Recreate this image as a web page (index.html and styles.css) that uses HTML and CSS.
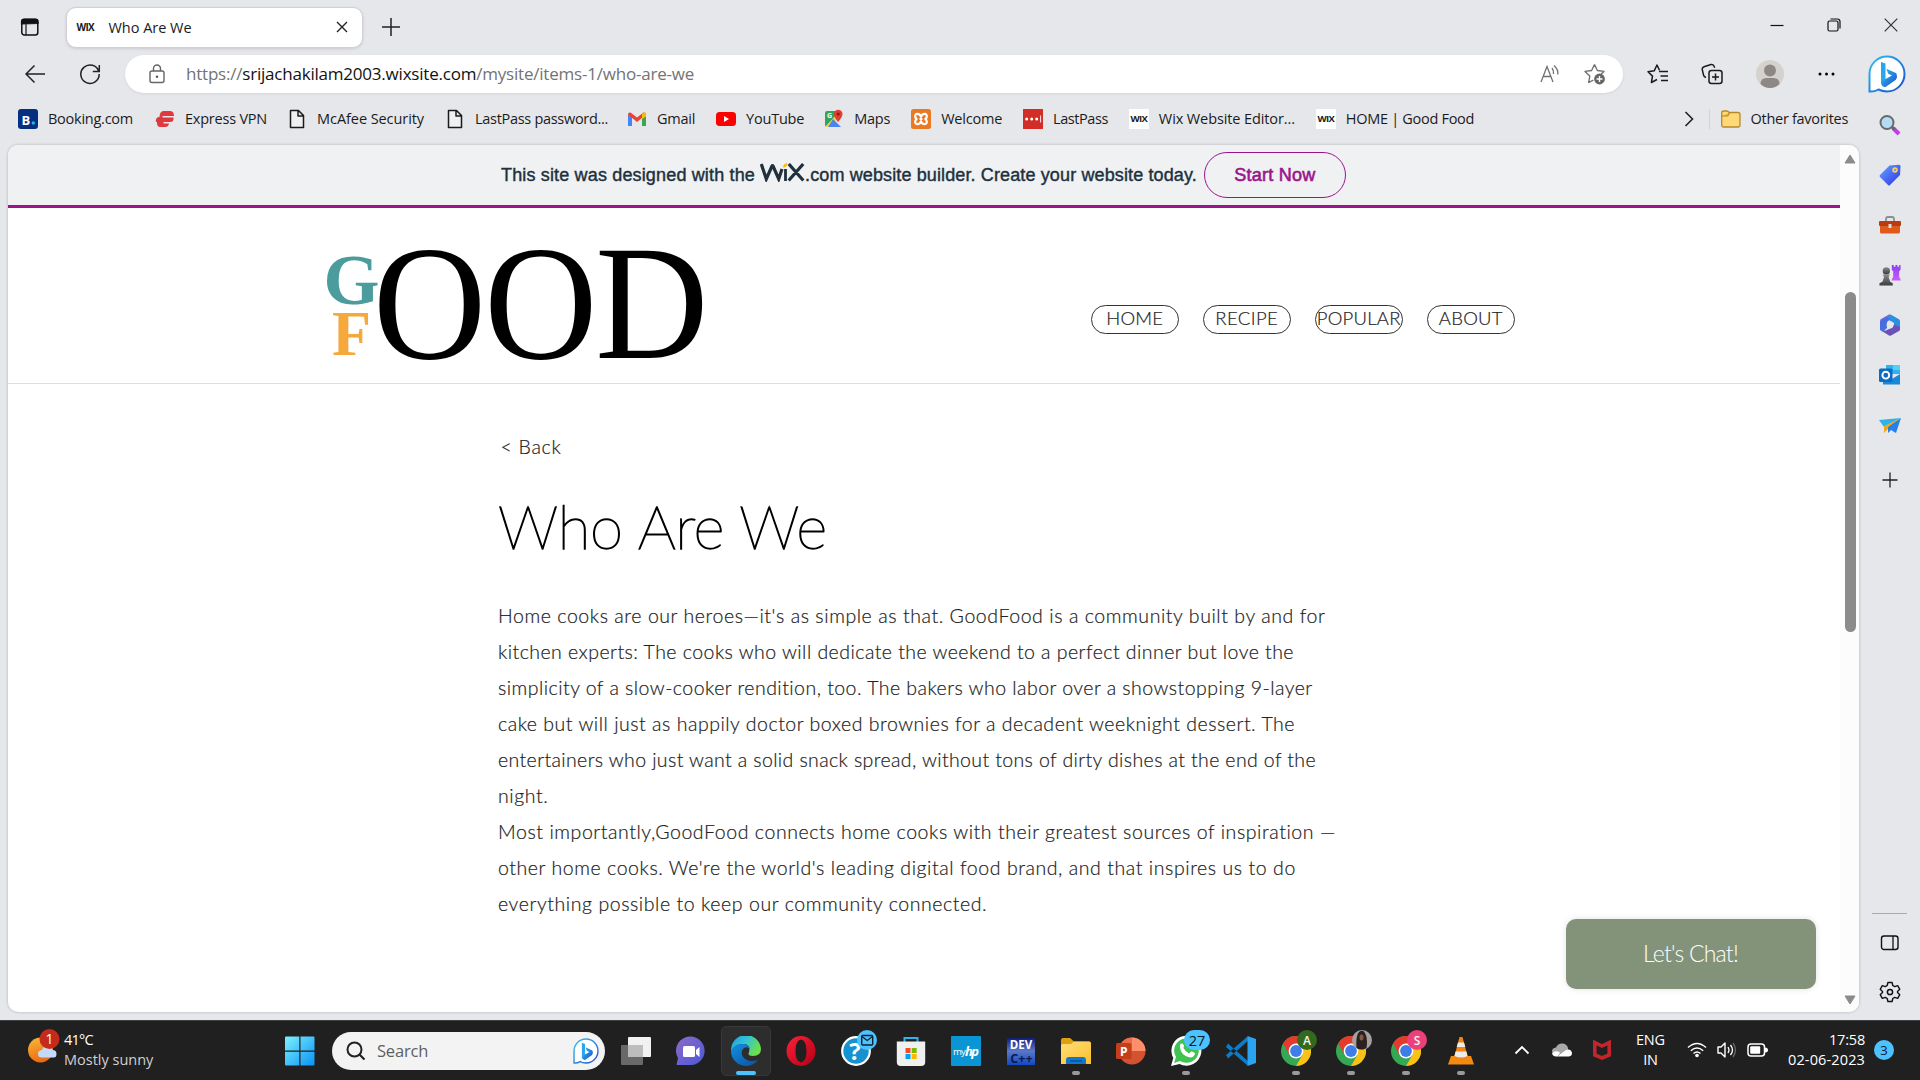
FILE: index.html
```html
<!DOCTYPE html>
<html lang="en">
<head>
<meta charset="utf-8">
<title>Who Are We</title>
<link rel="stylesheet" href="styles.css">
</head>
<body>
<svg class="defs" width="0" height="0">
  <defs>
    <linearGradient id="gBing" x1="0" y1="0" x2="1" y2="1"><stop offset="0" stop-color="#2fc3ee"/><stop offset="1" stop-color="#1b4fd0"/></linearGradient>
    <linearGradient id="gWin" x1="0" y1="0" x2="1" y2="1"><stop offset="0" stop-color="#7df0ff"/><stop offset="1" stop-color="#0a93f5"/></linearGradient>
    <linearGradient id="gSun" x1="0" y1="0" x2="0.3" y2="1"><stop offset="0" stop-color="#f6b93b"/><stop offset="1" stop-color="#ef6c12"/></linearGradient>
    <linearGradient id="gTag" x1="0" y1="0" x2="1" y2="1"><stop offset="0" stop-color="#69a7ff"/><stop offset="1" stop-color="#2b2fe8"/></linearGradient>
    <linearGradient id="gRook" x1="0" y1="0" x2="0" y2="1"><stop offset="0" stop-color="#8b3df0"/><stop offset="1" stop-color="#c95bff"/></linearGradient>
    <linearGradient id="gPawn" x1="0" y1="0" x2="0" y2="1"><stop offset="0" stop-color="#8a8a8a"/><stop offset="1" stop-color="#3c3c3c"/></linearGradient>
    <linearGradient id="gEdge" x1="0" y1="0" x2="1" y2="0.5"><stop offset="0" stop-color="#1c9be0"/><stop offset="0.5" stop-color="#32c2d4"/><stop offset="1" stop-color="#6be04a"/></linearGradient>
    <linearGradient id="gEdge2" x1="0" y1="0" x2="1" y2="1"><stop offset="0" stop-color="#1290e0"/><stop offset="1" stop-color="#0c50a0"/></linearGradient>
    <linearGradient id="gOpera" x1="0" y1="0" x2="1" y2="1"><stop offset="0" stop-color="#ff2038"/><stop offset="1" stop-color="#b00014"/></linearGradient>
    <linearGradient id="gTeams" x1="0" y1="0" x2="1" y2="1"><stop offset="0" stop-color="#8d6bc9"/><stop offset="1" stop-color="#4c58d8"/></linearGradient>
    <linearGradient id="gFolder" x1="0" y1="0" x2="1" y2="1"><stop offset="0" stop-color="#ffe07a"/><stop offset="1" stop-color="#fbbf2c"/></linearGradient>
    <linearGradient id="gDev" x1="0" y1="0" x2="0" y2="1"><stop offset="0" stop-color="#0a1670"/><stop offset="0.5" stop-color="#5b78c8"/><stop offset="1" stop-color="#1248c0"/></linearGradient>
    <symbol id="bing" viewBox="0 0 38 38">
      <path d="M1.500 36.500V19A17.500 17.500 0 1 1 19 36.500Q14 36.300 10.500 34.500Q6 37 1.500 36.500Z" fill="#fff" stroke="url(#gBing)" stroke-width="2"/>
      <path d="M13 7l4.500 1.600v16L13 29z" fill="#2aa6ee"/>
      <path d="M13 28l4.500-4 6.500-3.500-3.800-1.800-1.800-5 10 4.500q1.500 3.300-.5 6.500L17.500 32Q14 32.500 13 28z" fill="url(#gBing)"/>
    </symbol>
    <symbol id="page" viewBox="0 0 20 20"><path d="M3.500 1.500h8l5 5v12h-13zM11 1.500v5.500h5.500" fill="#eef0f2" stroke="#1b1b1b" stroke-width="1.500" stroke-linejoin="round"/></symbol>
    <symbol id="chrome" viewBox="0 0 30 30">
      <circle cx="15" cy="15" r="15" fill="#34a853"/>
      <path d="M2 7.500A15 15 0 0 1 28 7.500H15L8.500 18.750z" fill="#e33b2e"/>
      <path d="M28 7.500A15 15 0 0 1 15 30L21.500 18.750 15 7.500z" fill="#fbc116"/>
      <circle cx="15" cy="15" r="7.400" fill="#fff"/><circle cx="15" cy="15" r="5.900" fill="#3f7de8"/>
    </symbol>
  </defs>
</svg>

<div class="browser">
  <div class="tabs">
    <svg class="ws" width="20" height="20" viewBox="0 0 20 20"><rect x="1.800" y="2.500" width="16" height="15.500" rx="2.500" fill="none" stroke="#111" stroke-width="1.500"/><path d="M1.500 7V4.500a2.500 2.500 0 0 1 2.500-2.500h11.500a2.500 2.500 0 0 1 2.500 2.500V6.500zM6 6v12" fill="#111" stroke="#111" stroke-width="1.200"/></svg>
    <div class="tab">
      <span class="wixmini">WIX</span><span class="tabtitle">Who Are We</span>
      <svg width="12" height="12" viewBox="0 0 12 12"><path d="M1 1l10 10M11 1L1 11" stroke="#222" stroke-width="1.400"/></svg>
    </div>
    <svg class="plus" width="18" height="18" viewBox="0 0 18 18"><path d="M9 0v18M0 9h18" stroke="#222" stroke-width="1.500"/></svg>
    <div class="winctl">
      <svg width="14" height="14" viewBox="0 0 14 14"><path d="M.5 7.500h13" stroke="#111" stroke-width="1.200"/></svg>
      <svg width="14" height="14" viewBox="0 0 14 14"><rect x="1" y="3" width="10" height="10" rx="1.500" fill="none" stroke="#111" stroke-width="1.200"/><path d="M3.500 1h7a2.500 2.500 0 0 1 2.500 2.500v7" fill="none" stroke="#111" stroke-width="1.200"/></svg>
      <svg width="14" height="14" viewBox="0 0 14 14"><path d="M.7.700l12.600 12.600M13.300.7L.7 13.300" stroke="#333" stroke-width="1.200"/></svg>
    </div>
  </div>

  <div class="toolbar">
    <svg class="back" width="20" height="20" viewBox="0 0 20 20"><path d="M20 10H1M9.500 1.500L1 10l8.500 8.500" fill="none" stroke="#222" stroke-width="1.500"/></svg>
    <svg class="reload" width="22" height="22" viewBox="0 0 22 22"><path d="M19.800 8.500A9.200 9.200 0 1 0 20.200 11M20.300 2v6.500h-6.500" fill="none" stroke="#222" stroke-width="1.500"/></svg>
    <div class="address">
      <svg width="18" height="20" viewBox="0 0 18 20"><rect x="2" y="7" width="14" height="11.500" rx="2" fill="none" stroke="#666" stroke-width="1.400"/><path d="M5.500 7V4.500a3.500 3.500 0 0 1 7 0V7" fill="none" stroke="#666" stroke-width="1.400"/><circle cx="9" cy="12.700" r="1.200" fill="#555"/></svg>
      <span class="url">https://<b>srijachakilam2003.wixsite.com</b>/mysite/items-1/who-are-we</span>
      <svg class="read" width="20" height="20" viewBox="0 0 20 20"><path d="M1 18L7 2.500 13 18M3.200 12.500h7.700M12 4q2 2.500 1.500 6M14 1.500q4.500 4 3.800 9" fill="none" stroke="#707070" stroke-width="1.300"/></svg>
      <svg width="22" height="22" viewBox="0 0 22 22"><path d="M10.500 1.500l2.900 6 6.600.9-3.500 3.400M10.500 1.500l-2.900 6-6.600.9 4.800 4.600-1.100 6.500 4.600-2.400" fill="none" stroke="#707070" stroke-width="1.400" stroke-linejoin="round"/><circle cx="15.500" cy="16" r="5.400" fill="#666"/><path d="M15.500 13v6M12.500 16h6" stroke="#fff" stroke-width="1.400"/></svg>
    </div>
    <div class="tools">
      <svg width="22" height="22" viewBox="0 0 22 22"><path d="M12.500 7.200L10 2 7.200 7.800l-6.200.9 4.500 4.400-1.100 6.400 5.600-3M12 8.500h9M13.500 13h7.500M14 17.500h7" fill="none" stroke="#1b1b1b" stroke-width="1.500" stroke-linejoin="round"/></svg>
      <svg width="22" height="22" viewBox="0 0 22 22"><rect x="8" y="7.500" width="13" height="13" rx="2.500" fill="none" stroke="#1b1b1b" stroke-width="1.500"/><path d="M14.500 10.500v7M11 14h7M5 14.500Q3 14 2.500 12L1.200 6.500Q1 4.500 3 3.800l7-2.300q2-.5 3 1.500l.7 1.800" fill="none" stroke="#1b1b1b" stroke-width="1.500"/></svg>
      <svg width="28" height="28" viewBox="0 0 28 28"><circle cx="14" cy="14" r="14" fill="#d5d2ce"/><circle cx="14" cy="10.500" r="6" fill="#8d8884"/><path d="M4.500 24q0-6 6-6h7q6 0 6 6-4 4-9.500 4T4.500 24z" fill="#8d8884"/></svg>
      <svg width="20" height="20" viewBox="0 0 20 20"><circle cx="4" cy="10" r="1.500"/><circle cx="10.500" cy="10" r="1.500"/><circle cx="17" cy="10" r="1.500"/></svg>
      <svg width="38" height="38"><use href="#bing"/></svg>
    </div>
  </div>

  <div class="bookmarks">
    <a><svg width="20" height="20" viewBox="0 0 20 20"><rect width="20" height="20" rx="3" fill="#06307f"/><text x="3.500" y="15.500" class="bk">B</text><circle cx="15.300" cy="14" r="1.700" fill="#1bb5ec"/></svg><span>Booking.com</span></a>
    <a><svg width="20" height="20" viewBox="0 0 20 20"><path d="M8 2h7.500Q19 2.500 19 7H7.500v1.500h11Q19 13 15 13H8.500v1.500H14Q13.500 18 10 18H5.500Q1.500 18 2 13H.8Q.5 8 4.500 8 4.500 3 8 2z" fill="#e0383e"/></svg><span>Express VPN</span></a>
    <a><svg width="20" height="20"><use href="#page"/></svg><span>McAfee Security</span></a>
    <a><svg width="20" height="20"><use href="#page"/></svg><span>LastPass password...</span></a>
    <a><svg width="20" height="20" viewBox="0 0 20 20"><path d="M1 17V5l4 3v9z" fill="#4285f4"/><path d="M19 17V5l-4 3v9z" fill="#34a853"/><path d="M1 5.500Q1 3 3.500 3.500L10 8.500l6.500-5Q19 3 19 5.500L10 13z" fill="#ea4335"/><path d="M15 5l1.500-1.300Q19 3 19 6v1.500L15 10z" fill="#fbbc04"/></svg><span>Gmail</span></a>
    <a><svg width="20" height="20" viewBox="0 0 20 20"><rect y="3" width="20" height="14" rx="3.500" fill="#f00"/><path d="M8 7l5 3-5 3z" fill="#fff"/></svg><span>YouTube</span></a>
    <a><svg width="20" height="20" viewBox="0 0 20 20"><rect x="1" y="2" width="16" height="16" rx="2" fill="#34a35a"/><path d="M1 18L17 5v13z" fill="#e4e6ea"/><path d="M1 18L13 5l3 2L5 18z" fill="#fbd03e"/><path d="M9 10l8 8h-13z" fill="#4a84f0"/><path d="M14 13q-4-5-4-8a4 4 0 0 1 8.500 0q0 3-4.500 8z" fill="#e13d30"/><circle cx="14.200" cy="5" r="1.500" fill="#8a1a14"/><text x="3" y="8.500" class="mg">G</text></svg><span>Maps</span></a>
    <a><svg width="20" height="20" viewBox="0 0 20 20"><rect width="20" height="20" rx="2.500" fill="#e97923"/><path d="M10 7.500C8 3.500 3.800 4.500 4.200 7.500 4.500 9.300 6 10 6.500 10 6 10 4.500 10.700 4.200 12.500 3.800 15.500 8 16.500 10 12.500 12 16.500 16.200 15.500 15.800 12.500 15.500 10.700 14 10 13.500 10 14 10 15.500 9.300 15.800 7.500 16.200 4.500 12 3.500 10 7.500z" fill="none" stroke="#fff" stroke-width="2.200"/><path d="M8.500 10h3" stroke="#fff" stroke-width="2"/></svg><span>Welcome</span></a>
    <a><svg width="20" height="20" viewBox="0 0 20 20"><rect width="20" height="20" fill="#d32d27"/><g fill="#fff"><circle cx="3.700" cy="10" r="1.500"/><circle cx="8.700" cy="10" r="1.500"/><circle cx="13.700" cy="10" r="1.500"/><path d="M17.200 6.500h.9v7h-.9z"/></g></svg><span>LastPass</span></a>
    <a><i class="wixbox">WIX</i><span>Wix Website Editor...</span></a>
    <a><i class="wixbox">WIX</i><span>HOME | Good Food</span></a>
    <div class="more">
      <svg width="10" height="16" viewBox="0 0 10 16"><path d="M1.500 1L8.500 8l-7 7" fill="none" stroke="#222" stroke-width="1.600"/></svg>
      <hr>
      <a><svg width="20" height="20" viewBox="0 0 20 20"><path d="M.7 16V4q0-2 2-2h3q1.500 0 2.300 1.500H17q2 0 2 2V16q0 2-2 2H2.700q-2 0-2-2z" fill="#ffd978" stroke="#b6882a" stroke-width="1.300"/><path d="M.7 7h6l2-3.500" fill="#f0b93a" stroke="#b6882a" stroke-width="1.200"/></svg><span>Other favorites</span></a>
    </div>
  </div>

  <div class="main">
    <div class="page">
      <div class="site">
        <div class="banner">
          <span class="ban">This site was designed with the</span>
          <svg width="45" height="19" viewBox="0 0 45 19"><path d="M1.300 1l5 15 5.700-13q.500-1 1 0l5.700 13L22 6M28.800 1l14.500 16.500M43.200 1L28.700 17.500" fill="none" stroke="#20303c" stroke-width="3.200"/><path d="M25.500 6v12" stroke="#20303c" stroke-width="2.800"/><path d="M23 4.500q.2-4 4.300-4.500 .2 4.300-4.300 4.500z" fill="#fbbd00"/></svg>
          <span class="ban b2">.com website builder. Create your website today.</span>
          <a class="start">Start Now</a>
        </div>
        <div class="header">
          <div class="logo"><div class="gf"><span class="g">G</span><span class="f">F</span></div><span class="ood">OOD</span></div>
          <nav><a>HOME</a><a>RECIPE</a><a>POPULAR</a><a>ABOUT</a></nav>
        </div>
        <div class="content">
          <a class="backlink">&lt; Back</a>
          <h1>Who Are We</h1>
          <p>
            <span>Home cooks are our heroes—it's as simple as that. GoodFood is a community built by and for</span>
            <span>kitchen experts: The cooks who will dedicate the weekend to a perfect dinner but love the</span>
            <span>simplicity of a slow-cooker rendition, too. The bakers who labor over a showstopping 9-layer</span>
            <span>cake but will just as happily doctor boxed brownies for a decadent weeknight dessert. The</span>
            <span>entertainers who just want a solid snack spread, without tons of dirty dishes at the end of the</span>
            <span>night.</span>
            <span>Most importantly,GoodFood connects home cooks with their greatest sources of inspiration —</span>
            <span>other home cooks. We're the world's leading digital food brand, and that inspires us to do</span>
            <span>everything possible to keep our community connected.</span>
          </p>
        </div>
        <a class="chat">Let's Chat!</a>
      </div>
      <div class="scroll">
        <svg width="12" height="10" viewBox="0 0 12 10"><path d="M6 1l5 8H1z" fill="#8b8b8b" stroke="#8b8b8b" stroke-linejoin="round"/></svg>
        <div class="thumb"></div>
        <svg width="12" height="10" viewBox="0 0 12 10"><path d="M6 9l5-8H1z" fill="#8b8b8b" stroke="#8b8b8b" stroke-linejoin="round"/></svg>
      </div>
    </div>
    <div class="side">
      <svg width="22" height="22" viewBox="0 0 22 22"><path d="M14 14l6 6" stroke="#c13cf0" stroke-width="4"/><path d="M13 13l2.500 2.500" stroke="#666" stroke-width="3"/><circle cx="8" cy="8.500" r="6.500" fill="#b5dcf5" stroke="#6a6a6a" stroke-width="2"/></svg>
      <svg width="22" height="22" viewBox="0 0 22 22"><path d="M10.500 1.500L20 .8q1.500 0 1.500 1.500L21 11 11 21q-1 1-2 0l-8-8q-1-1 0-2z" fill="url(#gTag)"/><circle cx="16" cy="6" r="2" fill="#7d9bf8" stroke="#ffd83b" stroke-width="1.500"/></svg>
      <svg width="24" height="22" viewBox="0 0 24 22"><path d="M8 7V5q0-2 2-2h4q2 0 2 2v2" fill="none" stroke="#8a8f96" stroke-width="1.800"/><rect x="2" y="10" width="20" height="9.500" rx="1.500" fill="#df5a1b"/><rect x="1" y="7" width="22" height="5" rx="1" fill="#b93b0f"/><path d="M10.500 10h3v4h-3z" fill="#ddd"/></svg>
      <svg width="24" height="24" viewBox="0 0 24 24"><path d="M14 1h2v2h2V1h2v2h2V1h1.500v5.500L22 8v6l2 4H13.500l2-4V8L14 6.500z" fill="url(#gRook)"/><circle cx="8" cy="7.500" r="4" fill="url(#gPawn)"/><path d="M4 11.500h8l-1.500 2.500 1.500 5 3 2v2.500H.5V21L4 19l1.500-5z" fill="url(#gPawn)"/></svg>
      <svg width="22" height="22" viewBox="0 0 22 22"><path d="M10 .5L2 5q-1 .6-1 2v9l6-3V8l8-5-3-2q-1-.7-2-.5z" fill="#8163d4"/><path d="M12 .7l8 4.500q1 .6 1 2V15l-6-3V9L8 5l2-4.300z" fill="#2d8fe3"/><path d="M21 13v2.500q0 1-1 1.600L12 21.500q-1 .5-2 0l-8-5q4 1 7-1l4-2 2-3z" fill="#6c52b8"/><path d="M1 8v8l3 1.800L8 14V8l3-3-4-2z" fill="#476fe0"/><circle cx="11" cy="11" r="3.400" fill="#e6e7eb"/></svg>
      <svg width="22" height="22" viewBox="0 0 22 22"><path d="M7 1h14v9H7z" fill="#31b2ee"/><path d="M14 1h7v5h-7z" fill="#51d0fa"/><path d="M4 10l9 5 8-5v10.500H4z" fill="#1689da"/><rect x="0" y="4.500" width="13.500" height="13.500" rx="1.500" fill="#0a6cc4"/><circle cx="6.800" cy="11.200" r="3.400" fill="none" stroke="#fff" stroke-width="1.900"/></svg>
      <svg width="22" height="20" viewBox="0 0 22 20"><path d="M0 4L22 2 5 11z" fill="#2ab3ee"/><path d="M22 2L5 10v7l4-4z" fill="#f1a81c"/><path d="M22 2l-5 15-5-3-3 3V11z" fill="#2680e8"/></svg>
      <svg width="16" height="16" viewBox="0 0 16 16"><path d="M8 .5v15M.5 8h15" stroke="#222" stroke-width="1.300"/></svg>
      <div class="sidebottom">
        <hr>
        <svg width="20" height="18" viewBox="0 0 20 18"><rect x="1.500" y="2" width="16.500" height="13.500" rx="2.500" fill="none" stroke="#111" stroke-width="1.400"/><path d="M13 2v13.500" stroke="#111" stroke-width="1.300"/></svg>
        <svg width="22" height="22" viewBox="0 0 22 22"><path d="M8.900 1.500h4.200l.7 3 1.900 1.100 3-.9 2.100 3.600-2.300 2.100v1.200l2.300 2.100-2.100 3.600-3-.9-1.900 1.100-.7 3H8.900l-.7-3-1.900-1.100-3 .9-2.100-3.600 2.300-2.100v-1.200L1.200 8.300l2.100-3.600 3 .9 1.900-1.100z" fill="none" stroke="#111" stroke-width="1.400" stroke-linejoin="round"/><circle cx="11" cy="11" r="2.600" fill="none" stroke="#111" stroke-width="1.500"/></svg>
      </div>
    </div>
  </div>
</div>

<div class="taskbar">
  <div class="weather">
    <svg width="34" height="40" viewBox="0 0 34 40"><circle cx="13.500" cy="22" r="12.500" fill="url(#gSun)"/><path d="M15 29.500q-4 0-4-3.500t4-4q1.500-4 5.500-4t5 4q4 0 4 4t-3.500 3.500z" fill="#c4dafa"/><circle cx="22.500" cy="11" r="10" fill="#c42b1c"/><text x="22.500" y="16" class="one">1</text></svg>
    <div><div class="temp">41°C</div><div class="dim">Mostly sunny</div></div>
  </div>
  <svg class="win" width="30" height="30" viewBox="0 0 30 30"><path d="M0 1.500Q0 .5 1 .5h13.300v14H0zM15.500.5H28.500q1 0 1 1v13h-14zM0 15.700h14.300v13.800H1q-1 0-1-1zM15.500 15.700h14v12.800q0 1-1 1h-13z" fill="url(#gWin)"/></svg>
  <div class="search">
    <svg width="20" height="20" viewBox="0 0 20 20"><circle cx="8.500" cy="8.500" r="7" fill="none" stroke="#222" stroke-width="2"/><path d="M13.500 13.500l5 5" stroke="#222" stroke-width="2.200"/></svg>
    <span>Search</span>
    <svg width="26" height="26"><use href="#bing"/></svg>
  </div>
  <div class="apps">
    <div><svg width="30" height="30" viewBox="0 0 30 30"><rect x="7" y="1" width="23" height="20" rx="1" fill="#f1f1f1"/><rect x="0" y="9" width="22" height="20" rx="1" fill="#777" fill-opacity=".85"/><path d="M7 9h15v12H7z" fill="#bdbdbd"/></svg></div>
    <div><svg width="30" height="30" viewBox="0 0 30 30"><path d="M.5 29l1.500-7A14.300 14.300 0 1 1 15 29z" fill="url(#gTeams)"/><rect x="7" y="10" width="12" height="11" rx="1.500" fill="#fff"/><path d="M20 14l3.500-3v10L20 18z" fill="#fff"/></svg></div>
    <div class="active"><svg width="30" height="30" viewBox="0 0 30 30"><path d="M0 15A15 15 0 0 1 30 13q0 7-8 7-6 0-4-4Q20 8 12 8 4 8 0 15z" fill="url(#gEdge)"/><path d="M0 15Q4 7 12 8q6 0 7 5-3-3-6.500-.5Q9 16 12 21q5 6 15 3-5 6-12 6A15 15 0 0 1 0 15z" fill="url(#gEdge2)"/></svg></div>
    <div><svg width="30" height="30" viewBox="0 0 30 30"><path d="M15 0a14.500 15 0 1 0 0 30 14.500 15 0 1 0 0-30zM15 3.500q5.500 1 5.500 11.500T15 26.500Q9.500 25.500 9.500 15T15 3.500z" fill="url(#gOpera)" fill-rule="evenodd"/></svg></div>
    <div><svg class="over" width="38" height="36" viewBox="0 0 38 36"><circle cx="15" cy="21" r="13.800" fill="#1592cf" stroke="#fff" stroke-width="2.200"/><text x="14" y="30" class="q">?</text><circle cx="26" cy="10" r="10" fill="#4cc2ff"/><rect x="20.700" y="5.500" width="11" height="9.500" rx="1" fill="none" stroke="#102030" stroke-width="1.400"/><path d="M21 6.500l5.200 4 5.200-4" fill="none" stroke="#102030" stroke-width="1.300"/></svg></div>
    <div><svg width="30" height="30" viewBox="0 0 30 30"><path d="M8.500 6V2h13v4" fill="none" stroke="#2fb4ea" stroke-width="2"/><path d="M.8 5.500h28.400V26q0 4-4 4H4.800q-4 0-4-4z" fill="#f0f0f0"/><path d="M9.500 12h5v5h-5z" fill="#f25022"/><path d="M15.700 12h5v5h-5z" fill="#7fba00"/><path d="M9.500 18h5v5h-5z" fill="#00a4ef"/><path d="M15.700 18h5v5h-5z" fill="#ffb900"/></svg></div>
    <div><svg width="30" height="30" viewBox="0 0 30 30"><rect width="30" height="30" rx="1" fill="#0a96d4"/><text x="2" y="19" class="my">my</text><text x="14" y="20" class="hp">hp</text></svg></div>
    <div><svg width="30" height="30" viewBox="0 0 30 30"><rect x="1" y="1" width="28" height="28" fill="url(#gDev)"/><text x="15" y="13" class="dev">DEV</text><text x="15.500" y="27" class="cpp">C++</text></svg></div>
    <div class="run"><svg width="30" height="30" viewBox="0 0 30 30"><path d="M0 4q0-2 2-2h7l4 3.500h15q2 0 2 2V14H0z" fill="#dca010"/><path d="M0 9.500Q0 8 2 8h8l3-2.500h15q2 0 2 2V28H0z" fill="url(#gFolder)"/><path d="M5 28v-4q0-3 3-3h14q3 0 3 3v4z" fill="#1277cf"/><path d="M9 25h12" stroke="#0a4c90" stroke-width="1.300"/></svg></div>
    <div><svg width="30" height="30" viewBox="0 0 30 30"><circle cx="16" cy="15" r="13.500" fill="#d35230"/><path d="M16 1.500A13.500 13.500 0 0 1 29.500 15H16z" fill="#ff8f6b"/><path d="M16 1.500V15H2.500A13.500 13.500 0 0 1 16 1.500z" fill="#ed6c47"/><rect x="0" y="7" width="15.500" height="16" rx="1.500" fill="#c43e1c"/><text x="7.800" y="19.500" class="pp">P</text></svg></div>
    <div class="run"><svg class="over wide" width="40" height="36" viewBox="0 0 40 36"><path d="M0 36l2.300-8A15 15 0 1 1 8.500 34z" fill="#fff"/><path d="M3 33l2-6A12.300 12.300 0 1 1 9 31z" fill="#3fc351"/><path d="M9 14.500q2.500-2.500 4 1l-.5 2.500q2 4 5.500 5.500l2-2q4 .5 4 2.500-1.500 3.500-5 3.500Q10 26 9 17.500z" fill="#fff"/><rect x="13" y="0" width="26" height="20" rx="10" fill="#4cc2ff"/><text x="26" y="15.500" class="n27">27</text></svg></div>
    <div><svg width="30" height="30" viewBox="0 0 30 30"><path d="M2 7.500L23 26l-1.500 3.500L0 11zM2 22.500L23 4 21.500.5 0 19z" fill="#0a7cc9"/><path d="M21.500 0L30 3v24l-8.500 3z" fill="#2aa3f0"/></svg></div>
    <div class="run"><svg class="over" width="38" height="36" viewBox="0 0 38 36"><use href="#chrome" y="6" width="30" height="30"/><circle cx="26" cy="10" r="10" fill="#33691e"/><text x="26" y="14.500" class="av">A</text></svg></div>
    <div class="run"><svg class="over" width="38" height="36" viewBox="0 0 38 36"><use href="#chrome" y="6" width="30" height="30"/><circle cx="26" cy="10" r="10" fill="#a5a29d"/><path d="M20.500 18q-1-12 2.500-16 4-3 6 1 3 5 1.500 15-5 3-10 0z" fill="#2a2221"/><ellipse cx="25.500" cy="7.500" rx="2" ry="3" fill="#87594b"/></svg></div>
    <div class="run"><svg class="over" width="38" height="36" viewBox="0 0 38 36"><use href="#chrome" y="6" width="30" height="30"/><circle cx="26" cy="10" r="10" fill="#ec407a"/><text x="26" y="14.500" class="av">S</text></svg></div>
    <div class="run"><svg width="30" height="30" viewBox="0 0 30 30"><path d="M5 20h20l3 8.500H2z" fill="#f58a10"/><path d="M13.500 1h3L22 22q-7 4-14 0z" fill="#f58410"/><path d="M12 6.500h6l1.300 4.500h-8.600zM9.600 15.500h10.800l1.200 4.500q-6.500 3-13.200 0z" fill="#ececec"/></svg></div>
  </div>
  <div class="tray">
    <div><svg width="16" height="10" viewBox="0 0 16 10"><path d="M1.500 8.500L8 2l6.500 6.500" fill="none" stroke="#fff" stroke-width="1.800"/></svg></div>
    <div><svg width="20" height="14" viewBox="0 0 20 14"><path d="M4 12q-4-1-4-4t4-3.500Q6 0 11 .5q4 .5 5 4.500v7z" fill="#a8a8a8"/><path d="M6 13l8-6q5-2 6 3 0 3-3 3.500H4q-3 0-4-3 3-4 8-1z" fill="#fff"/></svg></div>
    <div><svg width="18" height="20" viewBox="0 0 18 20"><path d="M1.800 2.500L9 6l7.200-3.500v12.500L9 18 1.800 15z" fill="none" stroke="#c0272d" stroke-width="3.600"/></svg></div>
    <div class="lang"><span>ENG</span><span>IN</span></div>
    <div class="st"><svg width="20" height="16" viewBox="0 0 20 16"><path d="M1 5.500q9-8 18 0M3.800 8.700q6.200-5.400 12.400 0M6.500 11.500q3.500-3 7 0" fill="none" stroke="#fff" stroke-width="1.500"/><circle cx="10" cy="13.500" r="1.800" fill="#fff"/></svg></div>
    <div class="st"><svg width="20" height="18" viewBox="0 0 20 18"><path d="M1 6h3l4-4v14l-4-4H1z" fill="none" stroke="#fff" stroke-width="1.400" stroke-linejoin="round"/><path d="M11 6q2 3 0 6M13.500 4q4 5 0 10" fill="none" stroke="#fff" stroke-width="1.300"/><path d="M16 2q5 7 0 14" fill="none" stroke="#666" stroke-width="1.300"/></svg></div>
    <div class="st"><svg width="21" height="14" viewBox="0 0 21 14"><rect x="1" y="1" width="16.500" height="12" rx="3" fill="none" stroke="#fff" stroke-width="1.500"/><rect x="3.200" y="3.200" width="10" height="7.600" rx="1" fill="#fff"/><path d="M18 4.500q3 0 3 2.500t-3 2.500z" fill="#fff"/></svg></div>
    <div class="clock"><span class="time">17:58</span><span class="date">02-06-2023</span></div>
    <div class="notif">3</div>
  </div>
</div>
</body>
</html>
```
FILE: styles.css
```css
* { box-sizing: border-box; }
body { margin: 0; width: 1920px; height: 1080px; overflow: hidden; background: #e6e7eb; color: #1b1b1b; font-family: "Open Sans", "Noto Sans", sans-serif; font-size: 14.5px; white-space: nowrap; }
svg { display: block; flex: none; }
.defs { position: absolute; }
hr { margin: 0; border: 0; }

/* tab strip */
.browser { height: 1020px; display: flex; flex-direction: column; }
.tabs { height: 54px; display: flex; align-items: center; padding: 0 22px 0 20px; }
.ws, .tab, .plus { flex: none; }
.tab { width: 297px; height: 41px; margin: 0 19px 0 25.500px; background: #fff; border: 1px solid #cfd0d5; border-radius: 10px; box-shadow: 0 1px 3px rgba(0,0,0,.12); display: flex; align-items: center; padding: 0 14px 0 10px; }
.wixmini { width: 32px; font-weight: 700; font-size: 10px; letter-spacing: -.7px; }
.tabtitle { flex: 1; letter-spacing: -.03px; }
.winctl { margin-left: auto; display: flex; gap: 43px; padding-bottom: 5px; }

/* toolbar */
.toolbar { height: 39px; display: flex; align-items: center; }
.back { margin-left: 25px; }
.reload { margin: 0 24px 0 34px; }
.address { width: 1498px; height: 38px; border-radius: 19px; background: #fff; box-shadow: 0 1px 3px rgba(0,0,0,.08); display: flex; align-items: center; padding: 0 17px 0 23px; }
.url { margin-left: 20px; font-size: 17px; color: #737373; letter-spacing: -.212px; }
.url b { font-weight: 400; color: #111; }
.read { margin: 0 24px 0 auto; }
.tools { flex: 1; display: flex; align-items: center; justify-content: space-between; padding: 0 14px 0 24px; }

/* favourites bar */
.bookmarks { height: 51px; margin-bottom: 1px; display: flex; align-items: center; gap: 21px; padding: 0 72px 0 18px; }
.bookmarks a { display: flex; align-items: center; gap: 10px; letter-spacing: -.22px; }
.bookmarks a:nth-child(1) { letter-spacing: -.25px; }
.bookmarks > a:nth-child(2) { margin-left: 1px; }
.bookmarks a:nth-child(3) { letter-spacing: -.07px; margin-left: -1px; }
.bookmarks a:nth-child(4) { letter-spacing: -.3px; }
.bookmarks a:nth-child(5) { letter-spacing: -.27px; margin-left: -2px; }
.bookmarks a:nth-child(7) { margin-left: -1px; }
.bookmarks a:nth-child(9) { letter-spacing: -.44px; }
.bookmarks a:nth-child(10) { letter-spacing: -.109px; }
.bookmarks a:nth-child(11) { letter-spacing: -.3px; }
.more { margin-left: auto; display: flex; align-items: center; }
.more hr { width: 1px; height: 20px; background: #d2d3d8; margin: 0 12px 0 15px; }
.bookmarks .more a { letter-spacing: -.3px; }
.bk { font: 700 13px "Open Sans", sans-serif; fill: #fff; }
.mg { font: 700 7px "Open Sans", sans-serif; fill: #fff; }
.wixbox { width: 20px; height: 20px; background: #fff; font: 700 9.500px/20px "Open Sans", sans-serif; letter-spacing: -.7px; text-align: center; }

/* page viewport */
.main { flex: 1; display: flex; padding: 0 0 8px 8px; }
.page { width: 1851px; display: flex; background: #fff; border-radius: 10px; overflow: hidden; box-shadow: 0 0 3px rgba(0,0,0,.25); }
.site { width: 1832px; flex: none; position: relative; }
.scroll { width: 19px; flex: none; background: #fcfcfc; display: flex; flex-direction: column; align-items: center; padding: 9px 0 7px 1px; }
.thumb { width: 11px; height: 340px; border-radius: 6px; background: #8b8b8b; margin: 128px 0 auto; }

.banner { height: 63px; background: #eff1f2; border-bottom: 3px solid #9a158c; display: flex; align-items: center; padding-left: 493px; color: #20303c; }
.ban, .start { font: 18px "Liberation Sans", Arial, sans-serif; -webkit-text-stroke: .4px currentColor; letter-spacing: .157px; }
.b2 { letter-spacing: .125px; }
.banner svg { margin: -6px 0 0 5px; }
.start { width: 142px; height: 46px; margin-left: 7px; border: 1px solid #9a158c; border-radius: 23px; color: #9a158c; display: flex; align-items: center; justify-content: center; letter-spacing: .22px; -webkit-text-stroke-width: .6px; }

.header { height: 176px; border-bottom: 1px solid #dedede; display: flex; justify-content: space-between; padding: 0 325.500px 0 317px; }
.logo { display: flex; color: #000; font-family: "Liberation Serif", serif; }
.gf { width: 53px; display: flex; flex-direction: column; align-items: center; font-weight: 700; padding-top: 45px; }
.g { font-size: 72px; line-height: 54px; color: #4a9c9d; }
.f { font-size: 64px; line-height: 54px; color: #f5a83c; }
.ood { height: 157px; font-size: 159px; line-height: 157px; margin: 17px 0 0 -5px; letter-spacing: -2px; transform: scale(.985, 1.025); transform-origin: 0 50%; }
nav { display: flex; gap: 24.500px; padding-top: 97px; }
nav a { width: 87.500px; height: 29px; padding-bottom: 3px; border: 1px solid #333; border-radius: 15px; display: flex; align-items: center; justify-content: center; font: 300 18.500px Lato, sans-serif; color: #222; letter-spacing: .25px; -webkit-text-stroke: .2px currentColor; }
nav a:nth-child(2) { letter-spacing: .43px; }

.content { padding: 49px 0 0 490px; font-family: Lato, sans-serif; font-weight: 300; color: #222; -webkit-text-stroke: .2px currentColor; }
.backlink { display: block; width: max-content; margin-left: 2.500px; font-size: 19.500px; line-height: 28px; letter-spacing: .72px; }
h1 { width: max-content; margin: 25px 0 0; font-size: 60px; line-height: 80px; font-weight: 100; color: #000; letter-spacing: -.3px; -webkit-text-stroke-width: 1.300px; }
p { margin: 32px 0 0; font-size: 19.500px; line-height: 36px; letter-spacing: .57px; }
p span { display: block; width: max-content; }
p span:nth-child(2) { letter-spacing: .46px; }
p span:nth-child(3) { letter-spacing: .467px; }
p span:nth-child(4) { letter-spacing: .519px; }
p span:nth-child(5) { letter-spacing: .385px; }
.chat { position: absolute; right: 24px; bottom: 23px; width: 250px; height: 70px; border-radius: 10px; background: #83937a; color: #fff; box-shadow: 0 0 6px rgba(0,0,0,.12); display: flex; align-items: center; justify-content: center; font: 300 23px Lato, sans-serif; letter-spacing: -.8px; padding: 0 1px 2px 0; }

/* side bar */
.side { width: 61px; display: flex; flex-direction: column; align-items: center; }
.side > svg { height: 22px; margin-bottom: 28.200px; }
.side > svg:first-child { margin-top: -31.500px; }
.side > svg:nth-child(8) { height: 16px; margin-top: 7px; }
.sidebottom { margin-top: auto; display: flex; flex-direction: column; align-items: center; padding-bottom: 9px; }
.sidebottom hr { width: 35px; height: 1px; background: #a9aaae; margin-bottom: 20px; }
.sidebottom svg + svg { margin-top: 29px; }

/* taskbar */
.taskbar { height: 60px; background: #202020; border-top: 1px solid #3c4043; color: #fff; display: flex; align-items: center; }
.weather { width: 285px; padding-left: 27px; display: flex; align-items: center; gap: 3px; line-height: 20px; margin-top: -2px; }
.weather svg { margin-top: -4px; }
.temp { letter-spacing: -.73px; }
.dim { color: #d0d0d0; }
.one { font: 14px "Open Sans", sans-serif; fill: #fff; text-anchor: middle; }
.search { width: 273px; height: 38px; margin: 0 3px 0 17px; border-radius: 19px; background: #f3f3f3; display: flex; align-items: center; padding: 0 6px 0 14px; color: #5f5f5f; font-size: 16.500px; letter-spacing: -.2px; }
.search span { margin: 0 auto 0 11px; }
.apps { display: flex; }
.apps > div { width: 55px; height: 60px; display: flex; align-items: center; justify-content: center; position: relative; }
.over { margin: -6px 0 0 8px; }
.over.wide { margin-left: 10px; }
.apps > .active { width: 50px; height: 50px; margin: 5px 2.500px; background: #2d2d2d; border: 1px solid #383838; border-radius: 5px; }
.run::after, .active::after { content: ""; position: absolute; bottom: 6px; width: 8px; height: 4px; border-radius: 2px; background: #9a9a9a; }
.active::after { bottom: 0; width: 20px; background: #4cc2ff; }
.q { font: 700 24px "Open Sans", sans-serif; fill: #fff; text-anchor: middle; }
.my { font: 9.500px "Open Sans", sans-serif; fill: #fff; letter-spacing: -.8px; }
.hp { font: italic 700 13px "Open Sans", sans-serif; fill: #fff; letter-spacing: -1.500px; }
.dev { font: 700 11.500px "Open Sans", sans-serif; fill: #fff; text-anchor: middle; }
.cpp { font: 700 12.500px "Open Sans", sans-serif; fill: #0a1a50; text-anchor: middle; }
.pp { font: 700 12px "Open Sans", sans-serif; fill: #fff; text-anchor: middle; }
.n27 { font: 14.500px "Open Sans", sans-serif; fill: #0c1a24; text-anchor: middle; }
.av { font: 600 12px "Open Sans", sans-serif; fill: #f0f0f0; text-anchor: middle; }

.tray { display: flex; align-items: center; padding-left: 14px; line-height: 20px; margin-top: -1px; }
.tray > div { width: 40px; display: flex; justify-content: center; }
.tray > .lang { width: 57px; flex-direction: column; align-items: center; margin-right: 3px; letter-spacing: -.17px; }
.tray > .st { width: 30px; }
.tray > .clock { width: 93px; flex-direction: column; align-items: flex-end; }
.time { letter-spacing: -.2px; }
.date { letter-spacing: .13px; }
.tray > .notif { width: 20px; height: 20px; margin-left: 9px; border-radius: 10px; background: #4cc2ff; color: #102030; font-size: 13px; }
```
